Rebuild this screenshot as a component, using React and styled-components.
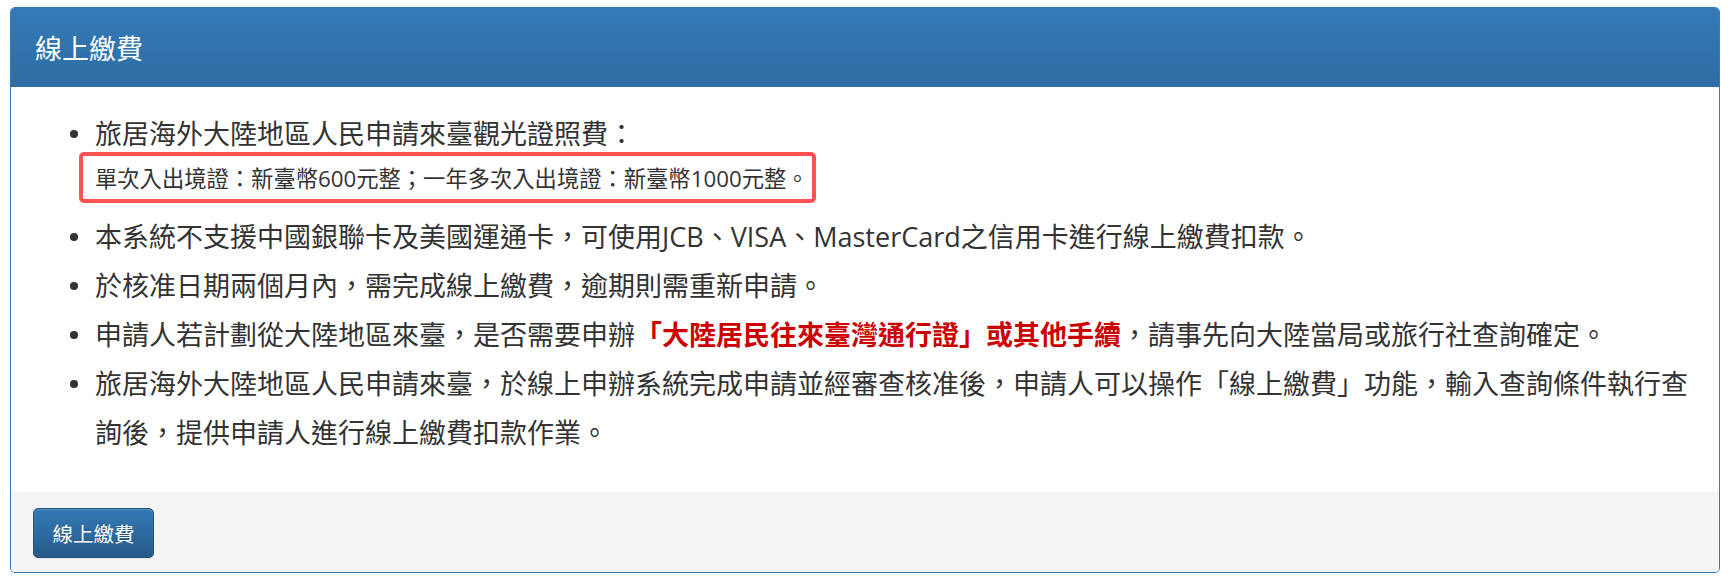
import React from 'react';
import styled, { createGlobalStyle } from 'styled-components';

const GlobalStyle = createGlobalStyle`
  html, body {
    margin: 0;
    padding: 0;
    background: #ffffff;
  }
  body {
    font-family: "Open Sans", "Noto Sans CJK TC", sans-serif;
    color: #333333;
  }
`;

const Page = styled.div`
  padding: 7px 8px 8px 10px;
`;

const Panel = styled.div`
  border: 1px solid #337ab7;
  border-radius: 5px;
  box-shadow: 0 1px 2px rgba(0, 0, 0, 0.05);
  overflow: hidden;
  background: #ffffff;
`;

const PanelHeading = styled.div`
  display: flex;
  align-items: center;
  height: 79px;
  padding: 0 24px;
  background-image: linear-gradient(to bottom, #337ab7 0, #2e6da4 100%);
  color: #ffffff;
  font-family: "Noto Sans CJK TC", sans-serif;
  font-size: 27px;
`;

const PanelBody = styled.div`
  padding: 22px 20px 35px 30px;
`;

const List = styled.ul`
  margin: 0;
  padding: 0 0 0 54px;
  list-style: none;
  font-size: 27px;
  line-height: 49px;
`;

const Item = styled.li`
  position: relative;

  &::before {
    content: '';
    position: absolute;
    left: -25px;
    top: 21px;
    width: 7.5px;
    height: 7.5px;
    border-radius: 50%;
    background: #333333;
  }
`;

const FeeBox = styled.span`
  display: block;
  width: fit-content;
  margin: -6px 0 9px -16px;
  padding: 7px 3px 4px 12px;
  border: 4px solid #ff5252;
  border-radius: 5px;
  font-size: 22.3px;
  line-height: 32px;
`;

const Alert = styled.strong`
  color: #cc0000;
  font-weight: bold;
`;

const PanelFooter = styled.div`
  height: 80px;
  box-sizing: border-box;
  padding: 16px 22px;
  background: #f4f4f4;
`;

const PrimaryButton = styled.button`
  width: 121px;
  height: 50px;
  padding: 0;
  border: 1px solid #245580;
  border-radius: 5px;
  background-image: linear-gradient(to bottom, #337ab7 0, #265a88 100%);
  box-shadow: inset 0 1px 0 rgba(255, 255, 255, 0.15), 0 1px 1px rgba(0, 0, 0, 0.075);
  color: #ffffff;
  text-shadow: 0 -1px 0 rgba(0, 0, 0, 0.2);
  font-family: "Noto Sans CJK TC", sans-serif;
  font-size: 20.5px;
  cursor: pointer;
`;

export default function App() {
  return (
    <Page>
      <GlobalStyle />
      <Panel>
        <PanelHeading>線上繳費</PanelHeading>
        <PanelBody>
          <List>
            <Item>
              旅居海外大陸地區人民申請來臺觀光證照費：
              <FeeBox>單次入出境證：新臺幣600元整；一年多次入出境證：新臺幣1000元整。</FeeBox>
            </Item>
            <Item>
              本系統不支援中國銀聯卡及美國運通卡，可使用JCB、VISA、MasterCard之信用卡進行線上繳費扣款。
            </Item>
            <Item>於核准日期兩個月內，需完成線上繳費，逾期則需重新申請。</Item>
            <Item>
              申請人若計劃從大陸地區來臺，是否需要申辦
              <Alert>「大陸居民往來臺灣通行證」或其他手續</Alert>
              ，請事先向大陸當局或旅行社查詢確定。
            </Item>
            <Item>
              旅居海外大陸地區人民申請來臺，於線上申辦系統完成申請並經審查核准後，申請人可以操作「線上繳費」功能，輸入查詢條件執行查詢後，提供申請人進行線上繳費扣款作業。
            </Item>
          </List>
        </PanelBody>
        <PanelFooter>
          <PrimaryButton>線上繳費</PrimaryButton>
        </PanelFooter>
      </Panel>
    </Page>
  );
}
